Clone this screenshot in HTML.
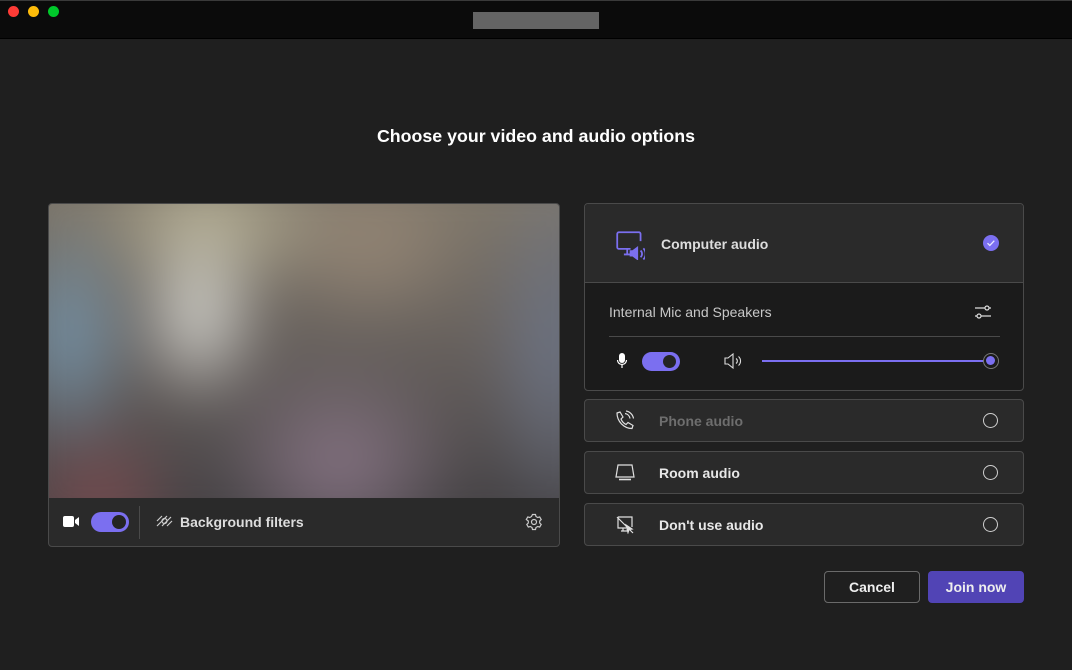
<!DOCTYPE html><html><head><style>
*{box-sizing:border-box;margin:0;padding:0}
body{width:1072px;height:670px;background:#1f1f1f;font-family:"Liberation Sans",sans-serif;position:relative;overflow:hidden;color:#e6e6e6}
.tb{position:absolute;left:0;top:0;width:1072px;height:39px;background:#0b0b0b;border-bottom:1px solid #000;border-top:1px solid #3a3a3a}
.dot{position:absolute;top:5px;width:11px;height:11px;border-radius:50%}
.ab{position:absolute}
.card{position:absolute;border:1px solid #4a4a4a;border-radius:4px;background:#2a2a2a}
.t{position:absolute;font-size:14px;font-weight:bold;color:#e8e8e8}
.radio{position:absolute;width:15px;height:15px;border:1.5px solid #cfcfcf;border-radius:50%}
</style></head><body>
<div class="tb">
<div class="dot" style="left:8px;background:#fe3b36"></div>
<div class="dot" style="left:28px;background:#febc0a"></div>
<div class="dot" style="left:48px;background:#00c92b"></div>
<div class="ab" style="left:473px;top:11px;width:126px;height:17px;background:#646464"></div>
</div>
<div class="ab" style="left:0;top:126px;width:1072px;text-align:center;font-size:17.8px;font-weight:bold;color:#fff">Choose your video and audio options</div>

<div class="card" style="left:48px;top:203px;width:512px;height:344px;background:#2a2a2a;overflow:hidden">
<div class="ab" style="left:0;top:0;width:510px;height:294px;overflow:hidden;background:#5a5656">
<div class="ab" style="left:-40px;top:-40px;width:600px;height:380px;filter:blur(26px);background:
radial-gradient(ellipse 70px 100px at 190px 150px,#d8d8d2,transparent),
radial-gradient(ellipse 70px 130px at 60px 170px,#7494ab,transparent),
radial-gradient(ellipse 130px 80px at 200px 60px,#b8b296,transparent),
radial-gradient(ellipse 110px 90px at 360px 80px,#958675,transparent),
radial-gradient(ellipse 90px 100px at 90px 340px,#7a4c50,transparent),
radial-gradient(ellipse 130px 110px at 330px 300px,#877484,transparent),
radial-gradient(ellipse 80px 200px at 550px 180px,#6c7486,transparent),
linear-gradient(180deg,#857d6e,#625c5a 55%,#3c3a3e)"></div>
</div>
<svg class="ab" style="left:13px;top:311px" width="20" height="14"><rect x="1" y="1" width="11" height="11" rx="2" fill="#fff"/><path d="M13 5l4-3v9l-4-3z" fill="#fff"/></svg>
<div class="ab" style="left:42px;top:308px;width:38px;height:20px;border-radius:10px;background:#7b6ff0"><div class="ab" style="left:21px;top:3px;width:14px;height:14px;border-radius:50%;background:#242424"></div></div>
<div class="ab" style="left:90px;top:302px;width:1px;height:33px;background:#4a4a4a"></div>
<svg class="ab" style="left:107px;top:311px" width="17" height="14" stroke="#ccc" stroke-width="1.2" fill="none"><path d="M1 6l5-5M1 11l10-10M6 11l9-9M11 11l5-5"/><circle cx="8.5" cy="6" r="2.5"/></svg>
<div class="t" style="left:131px;top:310px;color:#ddd">Background filters</div>
<svg class="ab" style="left:476px;top:309px" width="18" height="18" fill="none" stroke="#ccc" stroke-width="1.2"><circle cx="9" cy="9" r="2.5"/><path d="M7.5 1.5h3l.5 2 1.7 1 2-.6 1.5 2.6-1.5 1.5v2l1.5 1.5-1.5 2.6-2-.6-1.7 1-.5 2h-3l-.5-2-1.7-1-2 .6-1.5-2.6 1.5-1.5v-2L1.3 6.5l1.5-2.6 2 .6 1.7-1z"/></svg>
</div>

<div class="card" style="left:584px;top:203px;width:440px;height:188px;background:#1b1b1b;overflow:hidden">
<div class="ab" style="left:0;top:0;width:438px;height:79px;background:#2a2a2a;border-bottom:1px solid #4a4a4a"></div>
<svg class="ab" style="left:30px;top:26px" width="30" height="30" viewBox="0 0 27 27" fill="none" stroke="#7b6ff0" stroke-width="1.6"><path d="M14 17H3.5a1.5 1.5 0 0 1-1.5-1.5V3.5A1.5 1.5 0 0 1 3.5 2h18A1.5 1.5 0 0 1 23 3.5V10M8 22h6M11 17v5"/><path d="M14 19h2l4-3v10l-4-3h-2z" fill="#7b6ff0"/><path d="M23 18.5a4 4 0 0 1 0 6M25.5 16.5a7 7 0 0 1 0 10"/></svg>
<div class="t" style="left:76px;top:32px;color:#ddd">Computer audio</div>
<div class="ab" style="left:398px;top:31px;width:16px;height:16px;border-radius:50%;background:#7b6ff0"><svg width="16" height="16"><path d="M4.5 8.2l2.3 2.3 4.5-4.8" stroke="#e8e8ff" stroke-width="1.3" fill="none"/></svg></div>
<div class="ab" style="left:24px;top:100px;font-size:14px;color:#c8c8c8">Internal Mic and Speakers</div>
<svg class="ab" style="left:389px;top:99px" width="18" height="18" stroke="#ddd" stroke-width="1.2" fill="none"><path d="M1 5h10M15 5h2M1 13h2M7 13h10"/><circle cx="13" cy="5" r="2"/><circle cx="5" cy="13" r="2"/></svg>
<div class="ab" style="left:24px;top:132px;width:391px;height:1px;background:#4a4a4a"></div>
<svg class="ab" style="left:31px;top:148px" width="12" height="18" fill="#fff"><rect x="3" y="1" width="6" height="10" rx="3"/><path d="M1.5 8a4.5 4.5 0 0 0 9 0M6 12.5V16" stroke="#fff" stroke-width="1.2" fill="none"/></svg>
<div class="ab" style="left:57px;top:148px;width:38px;height:19px;border-radius:10px;background:#7b6ff0"><div class="ab" style="left:21px;top:3px;width:13px;height:13px;border-radius:50%;background:#242424"></div></div>
<svg class="ab" style="left:139px;top:148px" width="20" height="18" fill="none" stroke="#ddd" stroke-width="1.1"><path d="M1 6h3l5-4v14l-5-4H1z"/><path d="M12 6.5a3 3 0 0 1 0 5M14.5 4.5a6 6 0 0 1 0 9"/></svg>
<div class="ab" style="left:177px;top:156px;width:228px;height:2px;background:#7b6ff0"></div>
<div class="ab" style="left:398px;top:149px;width:16px;height:16px;border-radius:50%;border:1.5px solid #777;background:#1b1b1b"><div class="ab" style="left:2px;top:2px;width:9px;height:9px;border-radius:50%;background:#7b6ff0"></div></div>
</div>

<div class="card" style="left:584px;top:399px;width:440px;height:43px">
<svg class="ab" style="left:28px;top:10px" width="22" height="22" fill="none" stroke="#e0e0e0" stroke-width="1.2"><path d="M4 3l3-1 3 5-2 2c1 2.5 3 4.5 5 5.5l2-2 5 3-1 3c-8 0-15-7-15-15.5z"/><path d="M12 3.5a6 6 0 0 1 5 5M13 1a9 9 0 0 1 7.5 7.5"/></svg>
<div class="t" style="left:74px;top:13px;color:#6e6e6e">Phone audio</div>
<div class="radio" style="left:398px;top:13px"></div>
</div>
<div class="card" style="left:584px;top:451px;width:440px;height:43px">
<svg class="ab" style="left:30px;top:11px" width="20" height="20" fill="none" stroke="#e0e0e0" stroke-width="1.2"><path d="M3 2h14l2 12H1z"/><path d="M4 16.5h12" stroke-width="1.6"/></svg>
<div class="t" style="left:74px;top:13px">Room audio</div>
<div class="radio" style="left:398px;top:13px"></div>
</div>
<div class="card" style="left:584px;top:503px;width:440px;height:43px">
<svg class="ab" style="left:31px;top:12px" width="20" height="18" fill="none" stroke="#e0e0e0" stroke-width="1.2"><path d="M2 1h14v10M2 1v11h8M5 15h6M7 12v3M1 1l16 16"/><path d="M10 9l6 4-3 .5-1 3z" fill="#e0e0e0"/></svg>
<div class="t" style="left:74px;top:13px">Don't use audio</div>
<div class="radio" style="left:398px;top:13px"></div>
</div>

<div class="ab" style="left:824px;top:571px;width:96px;height:32px;border:1px solid #6a6a6a;border-radius:4px;background:#1f1f1f;text-align:center;line-height:30px;font-size:14px;font-weight:bold;color:#eee">Cancel</div>
<div class="ab" style="left:928px;top:571px;width:96px;height:32px;border-radius:4px;background:#5144b5;text-align:center;line-height:32px;font-size:14px;font-weight:bold;color:#eee">Join now</div>
</body></html>
